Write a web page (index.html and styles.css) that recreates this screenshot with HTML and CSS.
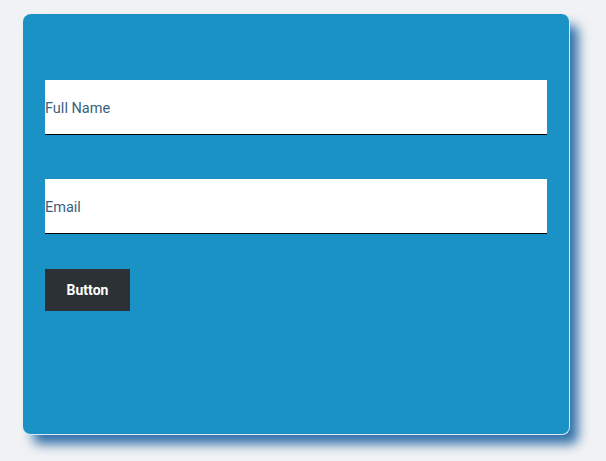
FILE: index.html
```html
<!DOCTYPE html>
<html lang="en">
<head>
    <meta charset="UTF-8">
    <meta name="viewport" content="width=device-width, initial-scale=1.0">
    <title>Form</title>

    <link rel="stylesheet" href="styles.css">
</head>
<body>
    <div class="card">
        <form class="form">
            <input class="field" type="text" placeholder="Full Name">
            <input class="field" type="email" placeholder="Email">
            <button class="btn" type="button">Button</button>
        </form>
    </div>
</body>
</html>
```

FILE: styles.css
```css
:root {
    --cardblue: #1b92c5;
    --shadowblue: #2f6ea8;
    --page: #f1f2f4;
    --dark: #2c3136;
    --hint: #3a5f7d;
}

* {
    margin: 0;
    padding: 0;
    box-sizing: border-box;
}

body {
    width: 100vw;
    height: 100vh;
    overflow: hidden;
    background-color: var(--page);
    font-family: Roboto, "Liberation Sans", sans-serif;
    padding: 14px 37px 0 23px;
}

.card {
    width: 547px;
    height: 421px;
    background-color: var(--cardblue);
    border-radius: 8px;
    border-right: 1px solid #dbe9f3;
    border-bottom: 1px solid #dbe9f3;
    box-shadow: 9px 10px 12px -1px var(--shadowblue);
    padding: 66px 21px 22px 22px;
}

.form {
    display: flex;
    flex-direction: column;
    align-items: flex-start;
}

.field {
    width: 502px;
    height: 55px;
    border: none;
    border-bottom: 1px solid #000;
    background-color: #fff;
    font-family: inherit;
    font-size: 14.5px;
    color: var(--hint);
    outline: none;
    padding-top: 2px;
    margin-bottom: 44px;
}

.field::placeholder {
    color: var(--hint);
    opacity: 1;
}

.field + .field {
    margin-bottom: 35px;
}

.btn {
    width: 85px;
    height: 42px;
    border: none;
    background-color: var(--dark);
    color: #fff;
    font-family: inherit;
    font-size: 14px;
    font-weight: bold;
}
```
